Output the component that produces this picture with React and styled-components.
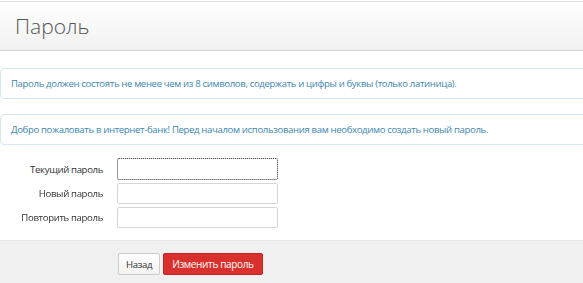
import styled, { createGlobalStyle } from "styled-components";

const GlobalStyle = createGlobalStyle`
  body {
    margin: 0;
    background: #ffffff;
    font-family: "Open Sans", "Liberation Sans", sans-serif;
  }
`;

const Page = styled.div`
  width: 583px;
  height: 283px;
  overflow: hidden;
  display: flex;
  flex-direction: column;
`;

const Header = styled.div`
  margin-top: 1px;
  height: 48px;
  border-top: 1px solid #e2e2e2;
  border-bottom: 1px solid #d4d4d4;
  background: linear-gradient(#ffffff, #f1f1f1);
  display: flex;
  align-items: center;
  padding-left: 15px;
`;

const Title = styled.h1`
  margin: 0;
  font-size: 21px;
  font-weight: 300;
  color: #555555;
`;

const Alert = styled.div`
  margin-top: ${(p) => p.$top}px;
  margin-right: -10px;
  height: 29px;
  border: 1px solid #d3e8f0;
  border-radius: 4px;
  padding-left: 10px;
  display: flex;
  align-items: center;
  font-size: 9.6px;
  letter-spacing: -0.36px;
  color: #3f87ad;
`;

const Form = styled.div`
  margin-top: 13px;
  display: flex;
  flex-direction: column;
  gap: 3px;
`;

const Row = styled.div`
  display: flex;
  align-items: center;
  gap: 14px;
`;

const Label = styled.label`
  width: 103px;
  text-align: right;
  font-size: 9.6px;
  letter-spacing: -0.35px;
  color: #333333;
`;

const Input = styled.input`
  box-sizing: border-box;
  width: 161px;
  height: ${(p) => (p.$focused ? 22 : 21)}px;
  margin: 0;
  border: 1px solid #d6d6d6;
  border-radius: 2px;
  background: #ffffff;
  padding: 0 4px;
  outline: ${(p) => (p.$focused ? "1px dotted #555" : "none")};
  outline-offset: -1px;
`;

const Footer = styled.div`
  margin-top: 12px;
  flex: 1;
  background: #f0f0f0;
  border-top: 1px solid #e8e8e8;
  display: flex;
  align-items: flex-start;
  gap: 3px;
  padding: 12px 0 0 118px;
`;

const Button = styled.button`
  height: 22px;
  padding: 0 ${(p) => (p.$primary ? 8 : 7)}px;
  border: 1px solid ${(p) => (p.$primary ? "#c5221f" : "#cccccc")};
  border-radius: 2px;
  background: ${(p) => (p.$primary ? "#d8302c" : "linear-gradient(#ffffff, #f2f2f2)")};
  color: ${(p) => (p.$primary ? "#ffffff" : "#333333")};
  font-family: "Open Sans", "Liberation Sans", sans-serif;
  font-size: ${(p) => (p.$primary ? 10 : 9.6)}px;
  letter-spacing: -0.35px;
  cursor: pointer;
`;

export default function App() {
  return (
    <>
      <GlobalStyle />
      <Page>
        <Header>
          <Title>Пароль</Title>
        </Header>
        <Alert $top={17}>
          Пароль должен состоять не менее чем из 8 символов, содержать и цифры и буквы (только латиница).
        </Alert>
        <Alert $top={15}>
          Добро пожаловать в интернет-банк! Перед началом использования вам необходимо создать новый пароль.
        </Alert>
        <Form>
          <Row>
            <Label>Текущий пароль</Label>
            <Input type="password" $focused autoFocus />
          </Row>
          <Row>
            <Label>Новый пароль</Label>
            <Input type="password" />
          </Row>
          <Row>
            <Label>Повторить пароль</Label>
            <Input type="password" />
          </Row>
        </Form>
        <Footer>
          <Button>Назад</Button>
          <Button $primary>Изменить пароль</Button>
        </Footer>
      </Page>
    </>
  );
}
